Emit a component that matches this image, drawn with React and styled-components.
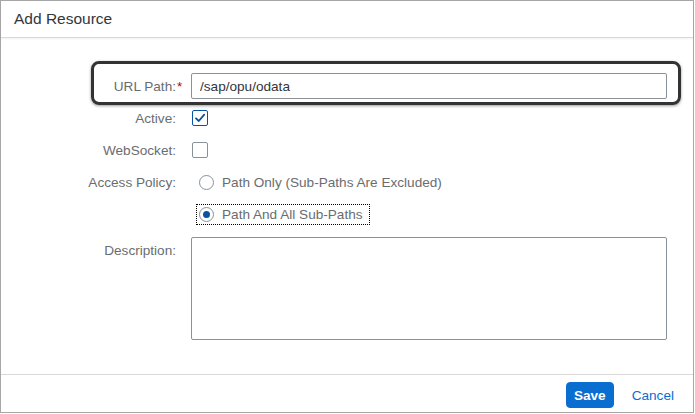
import React from "react";
import styled, { createGlobalStyle } from "styled-components";

const Global = createGlobalStyle`
  html, body { margin: 0; padding: 0; background: #fff; }
  body { font-family: "Liberation Sans", Arial, sans-serif; }
  * { box-sizing: border-box; }
`;

const Dialog = styled.div`
  width: 694px;
  height: 413px;
  border: 1px solid #a7a7a7;
  background: #fff;
  display: flex;
  flex-direction: column;
`;

const Header = styled.header`
  height: 37px;
  flex: none;
  display: flex;
  align-items: center;
  padding: 0 0 1px 13px;
  border-bottom: 1px solid #d9d9d9;
  box-shadow: 0 1px 2px rgba(0, 0, 0, 0.06);
  font-size: 15.5px;
  color: #32363a;
`;

const Body = styled.main`
  flex: 1;
  padding: 32px 26px 0 0;
  display: flex;
  flex-direction: column;
`;

const Row = styled.div`
  display: grid;
  grid-template-columns: 183px 1fr;
  column-gap: 7px;
  align-items: ${(p) => (p.$top ? "start" : "center")};
  height: ${(p) => (p.$h ? p.$h : "32px")};
  margin-top: ${(p) => (p.$mt ? p.$mt : "0")};
  position: relative;
`;

const Highlight = styled.div`
  position: absolute;
  left: 90px;
  right: -14px;
  top: -9px;
  bottom: -3px;
  border: 3px solid #333;
  border-radius: 8px;
  box-shadow: 0 1px 3px rgba(0, 0, 0, 0.4);
  pointer-events: none;
`;

const Label = styled.label`
  text-align: right;
  font-size: 13.6px;
  color: #6a6d70;
  padding-right: ${(p) => (p.$required ? "0" : "8px")};
  padding-top: ${(p) => (p.$top ? "6px" : "0")};
  white-space: nowrap;
`;

const Star = styled.span`
  color: #bb0000;
  display: inline-block;
  width: 8px;
  text-align: left;
  padding-left: 1px;
`;

const Input = styled.input`
  height: 26px;
  width: 100%;
  border: 1px solid #89919a;
  border-radius: 2px;
  padding: 0 8px;
  font-family: inherit;
  font-size: 13.6px;
  color: #32363a;
  outline: none;
`;

const TextArea = styled.textarea`
  width: 100%;
  height: 103px;
  border: 1px solid #89919a;
  border-radius: 2px;
  resize: none;
  font-family: inherit;
  font-size: 13.6px;
  outline: none;
  display: block;
`;

const Box = styled.span`
  width: 16px;
  height: 16px;
  margin-left: 1px;
  border: 1px solid ${(p) => (p.$checked ? "#0854a0" : "#89919a")};
  border-radius: 2px;
  background: #fff;
  display: flex;
  align-items: center;
  justify-content: center;
`;

const RadioGroupCell = styled.div`
  display: flex;
  align-items: center;
`;

const RadioItem = styled.div`
  display: inline-flex;
  align-items: center;
  gap: 8px;
  margin-left: 5px;
  padding: 2px 6px 2px 2px;
  border: 1px dotted ${(p) => (p.$focused ? "#000" : "transparent")};
  font-size: 13.6px;
  color: #6a6d70;
`;

const Circle = styled.span`
  width: 15px;
  height: 15px;
  border-radius: 50%;
  border: 1px solid #89919a;
  display: flex;
  align-items: center;
  justify-content: center;
  background: #fff;
  &::after {
    content: "";
    width: 7px;
    height: 7px;
    border-radius: 50%;
    background: ${(p) => (p.$checked ? "#0854a0" : "transparent")};
  }
`;

const Footer = styled.footer`
  height: 38px;
  flex: none;
  border-top: 1px solid #d9d9d9;
  display: flex;
  align-items: center;
  justify-content: flex-end;
  padding: 3px 10px 0 0;
`;

const Button = styled.button`
  height: 26px;
  border-radius: 4px;
  font-family: inherit;
  font-size: 13.6px;
  padding: 0 ${(p) => (p.$primary ? "7px" : "8px")};
  margin-left: ${(p) => (p.$primary ? "0" : "9px")};
  border: 1px solid ${(p) => (p.$primary ? "#0a6ed1" : "transparent")};
  background: ${(p) => (p.$primary ? "#0a6ed1" : "transparent")};
  color: ${(p) => (p.$primary ? "#fff" : "#0a6ed1")};
  font-weight: ${(p) => (p.$primary ? "bold" : "normal")};
  cursor: pointer;
`;

function Checkbox({ checked }) {
  return (
    <Box $checked={checked}>
      {checked && (
        <svg width="12" height="12" viewBox="0 0 12 12">
          <path d="M2 6.3 L4.8 9 L10.2 2.6" fill="none" stroke="#0854a0" strokeWidth="1.8" strokeLinecap="round" strokeLinejoin="round" />
        </svg>
      )}
    </Box>
  );
}

export default function App() {
  return (
    <>
      <Global />
      <Dialog>
        <Header>Add Resource</Header>
        <Body>
          <Row>
            <Highlight />
            <Label $required>
              URL Path:<Star>*</Star>
            </Label>
            <Input defaultValue="/sap/opu/odata" />
          </Row>
          <Row>
            <Label>Active:</Label>
            <Checkbox checked />
          </Row>
          <Row>
            <Label>WebSocket:</Label>
            <Checkbox />
          </Row>
          <Row>
            <Label>Access Policy:</Label>
            <RadioGroupCell>
              <RadioItem>
                <Circle />
                Path Only (Sub-Paths Are Excluded)
              </RadioItem>
            </RadioGroupCell>
          </Row>
          <Row>
            <span />
            <RadioGroupCell>
              <RadioItem $focused>
                <Circle $checked />
                Path And All Sub-Paths
              </RadioItem>
            </RadioGroupCell>
          </Row>
          <Row $top $h="103px" $mt="7px">
            <Label $top>Description:</Label>
            <TextArea />
          </Row>
        </Body>
        <Footer>
          <Button $primary>Save</Button>
          <Button>Cancel</Button>
        </Footer>
      </Dialog>
    </>
  );
}
